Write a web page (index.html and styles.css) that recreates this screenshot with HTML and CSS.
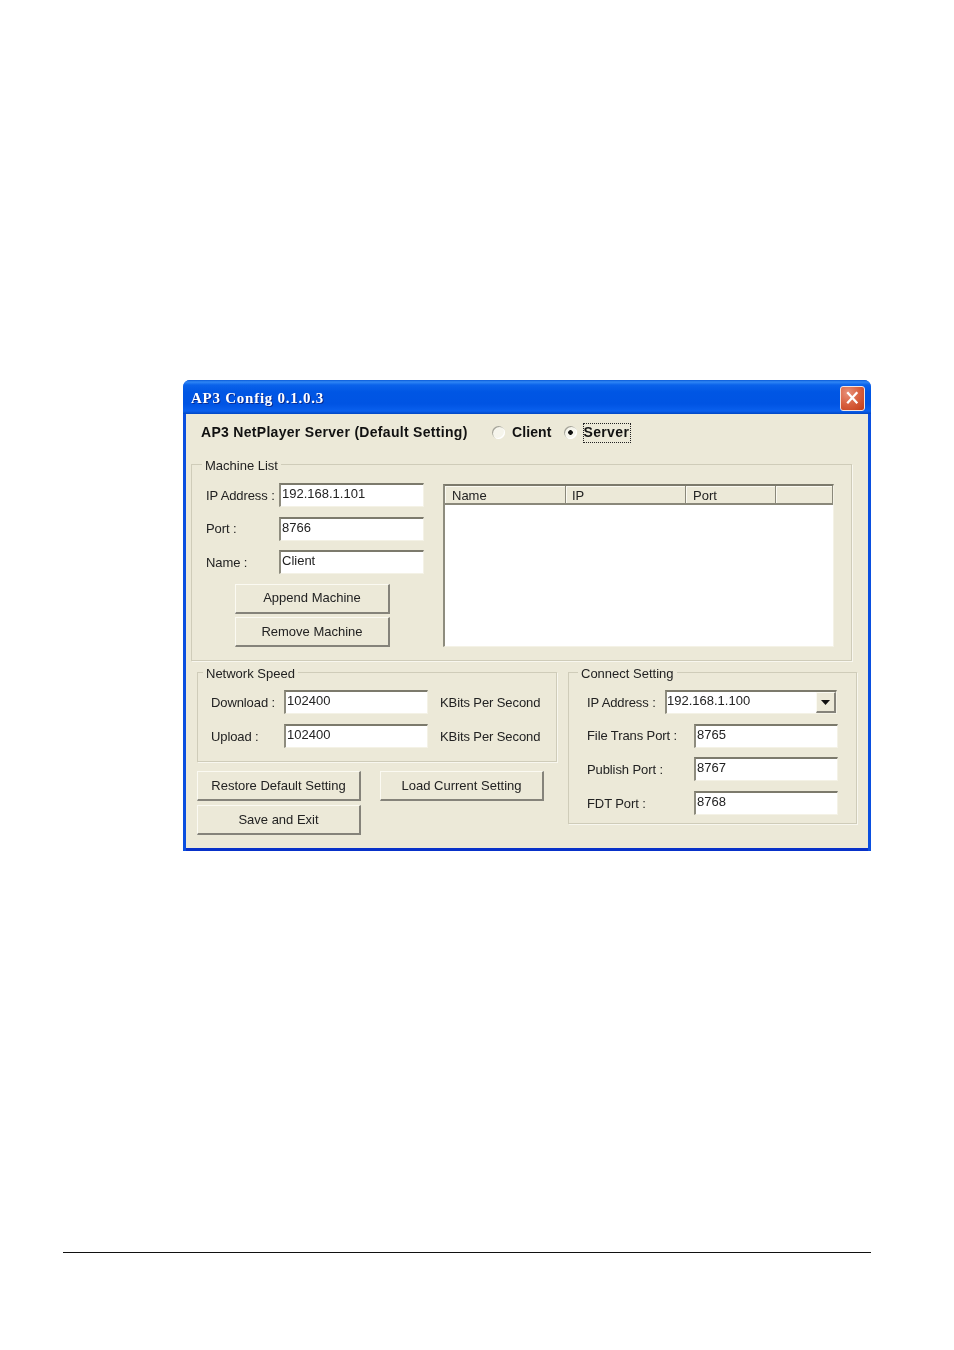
FILE: index.html
```html
<!DOCTYPE html>
<html lang="en">
<head>
<meta charset="utf-8">
<title>AP3 Config</title>
<link rel="stylesheet" href="styles.css">
</head>
<body>
<main class="page">
  <section class="window">
    <header class="titlebar">
      <span class="title">AP3 Config 0.1.0.3</span>
      <span class="close"><svg viewBox="0 0 24 24" width="24" height="24"><path d="M6.5 6 L17 17.5 M17 6 L6.5 17.5" stroke="#fff" stroke-width="2.4" fill="none"/></svg></span>
    </header>
    <div class="client">
      <div class="mode">
        <span class="mode-title">AP3 NetPlayer Server (Default Setting)</span>
        <span class="radio radio-client"></span><span class="mode-opt">Client</span>
        <span class="radio radio-server checked"></span><span class="mode-opt focus">Server</span>
      </div>

      <div class="group machine">
        <span class="legend">Machine List</span>
        <div class="machine-left">
          <div class="field"><span class="label">IP Address :</span><div class="box">192.168.1.101</div></div>
          <div class="field"><span class="label">Port :</span><div class="box">8766</div></div>
          <div class="field"><span class="label">Name :</span><div class="box">Client</div></div>
          <div class="machine-btns">
            <div class="btn">Append Machine</div>
            <div class="btn">Remove Machine</div>
          </div>
        </div>
        <div class="list">
          <div class="list-head">
            <span class="col col-name">Name</span>
            <span class="col col-ip">IP</span>
            <span class="col col-port">Port</span>
            <span class="col col-end"></span>
          </div>
        </div>
      </div>

      <div class="lower">
        <div class="lower-left">
          <div class="group network">
            <span class="legend legend-network">Network Speed</span>
            <div class="field"><span class="label">Download :</span><div class="box">102400</div><span class="unit">KBits Per Second</span></div>
            <div class="field"><span class="label">Upload :</span><div class="box">102400</div><span class="unit">KBits Per Second</span></div>
          </div>
          <div class="actions">
            <div class="btn">Restore Default Setting</div>
            <div class="btn">Load Current Setting</div>
            <div class="btn">Save and Exit</div>
          </div>
        </div>
        <div class="group connect">
          <span class="legend legend-connect">Connect Setting</span>
          <div class="field"><span class="label label-ip">IP Address :</span>
            <div class="box combo">192.168.1.100<span class="arrow"><svg viewBox="0 0 9 5" width="9" height="5"><path d="M0 0 H9 L4.5 5 Z" fill="#111"/></svg></span></div>
          </div>
          <div class="field"><span class="label label-port">File Trans Port :</span><div class="box">8765</div></div>
          <div class="field"><span class="label label-port">Publish Port :</span><div class="box">8767</div></div>
          <div class="field"><span class="label label-port">FDT Port :</span><div class="box">8768</div></div>
        </div>
      </div>
    </div>
  </section>
  <hr class="rule">
</main>
</body>
</html>
```
FILE: styles.css
```css
* { box-sizing: border-box; }
html, body { margin: 0; padding: 0; background: #fff; }
.page { width: 954px; height: 1350px; padding-top: 380px; overflow: hidden; }

.window {
  width: 688px;
  height: 471px;
  margin-left: 183px;
  border-radius: 7px 7px 0 0;
  background: #0a4fe0;
  display: flex;
  flex-direction: column;
  font: 13px/16px "Liberation Sans", Arial, sans-serif;
  color: #222;
  filter: blur(0.5px);
}

.titlebar {
  height: 34px;
  flex: none;
  display: flex;
  align-items: center;
  justify-content: space-between;
  padding: 2px 6px 0 8px;
  border-radius: 7px 7px 0 0;
  background: linear-gradient(180deg, #0a5ad8 0, #2f86f5 2px, #0a62ea 5px, #0056e4 12px, #0054e3 24px, #0a60ee 31px, #0046c4 34px);
}
.title {
  font: bold 15px/18px "Liberation Serif", serif;
  letter-spacing: 0.75px;
  color: #fff;
  text-shadow: 1px 1px 0 #0a2a90;
}
.close {
  width: 25px;
  height: 25px;
  display: flex;
  align-items: center;
  justify-content: center;
  border: 1px solid #f4e4de;
  border-radius: 3px;
  background: radial-gradient(circle at 30% 25%, #e8917a 0, #d8603f 50%, #c23c18 100%);
}

.client {
  flex: 1;
  margin: 0 3px 3px;
  background: #ece9d8;
  padding: 1px 0 0;
  box-shadow: 0 3px 0 #0831c9;
}

.mode {
  height: 49px;
  padding: 8px 0 0 15px;
  display: flex;
  align-items: flex-start;
  font-weight: bold;
  font-size: 14px;
  line-height: 18px;
  color: #111;
}
.mode-title { width: 291px; letter-spacing: 0.3px; white-space: nowrap; }
.mode-opt { letter-spacing: 0.1px; }
.radio {
  width: 13px;
  height: 13px;
  margin-top: 3px;
  border-radius: 50%;
  flex: none;
  background: #f6f5ec;
  box-shadow: inset 1px 1px 0 #a5a498, inset -1px -1px 0 #fff;
}
.radio-client { margin-right: 7px; }
.radio-server { margin-left: 12px; margin-right: 7px; }
.checked { background: radial-gradient(circle, #111 0 2px, #f6f5ec 2.6px); }
.focus {
  outline: 1px dotted #222;
  width: 46px;
  height: 18px;
  margin-top: 1px;
  line-height: 16px;
  letter-spacing: 0.35px;
  white-space: nowrap;
}

.group {
  position: relative;
  border: 1px solid #cfccb9;
  box-shadow: 1px 1px 0 #f8f7ef;
}
.legend {
  position: absolute;
  top: -7px;
  left: 10px;
  padding: 0 3px;
  background: #ece9d8;
  white-space: nowrap;
}
.legend-network { left: 5px; }
.legend-connect { left: 9px; }

.field { display: flex; align-items: center; height: 24px; }
.label { width: 73px; flex: none; white-space: nowrap; padding-top: 1px; letter-spacing: -0.1px; }
.box {
  height: 24px;
  flex: 1;
  min-width: 0;
  padding: 1px 0 0 1px;
  background: #fff;
  border-style: solid;
  border-width: 2px 1px 1px 2px;
  border-color: #7c7a6c #f4f2e6 #f4f2e6 #8e8c7e;
  color: #222;
  white-space: nowrap;
}

.btn {
  height: 30px;
  display: flex;
  align-items: center;
  justify-content: center;
  background: #ece9d8;
  border-style: solid;
  border-width: 1px 2px 2px 1px;
  border-color: #fbfaf2 #85837a #85837a #fbfaf2;
  white-space: nowrap;
}

/* Machine list */
.machine {
  width: 661px;
  height: 197px;
  margin-left: 5px;
  padding: 18px 0 0 14px;
  display: flex;
  gap: 19px;
}
.machine-left { width: 218px; flex: none; display: flex; flex-direction: column; gap: 9.7px; }
.machine-btns { margin-left: 29px; width: 155px; display: flex; flex-direction: column; gap: 3px; }
.machine-btns .btn:first-child { padding-bottom: 1px; }

.list {
  width: 391px;
  height: 163px;
  margin-top: 1px;
  background: #fff;
  border-style: solid;
  border-width: 2px 1px 1px 2px;
  border-color: #7c7a6c #f4f2e6 #f4f2e6 #8e8c7e;
}
.list-head { display: flex; height: 19px; }
.col {
  padding: 2px 0 0 7px;
  background: #ece9d8;
  border-style: solid;
  border-width: 0 1px 2px 0;
  border-color: #8a887a;
  box-shadow: inset 1px 1px 0 #fbfaf2;
}
.col-name { width: 121px; }
.col-ip { width: 120px; padding-left: 6px; }
.col-port { width: 90px; }
.col-end { width: 57px; }

/* Lower area */
.lower { display: flex; margin: 11px 0 0 11px; gap: 11px; align-items: flex-start; }
.lower-left { width: 360px; flex: none; }

.network {
  height: 90px;
  padding: 17px 0 0 13px;
  display: flex;
  flex-direction: column;
  gap: 10px;
}
.network .box { flex: none; width: 144px; }
.unit { margin-left: 12px; padding-top: 1px; white-space: nowrap; letter-spacing: -0.1px; }

.actions {
  margin-top: 9px;
  display: grid;
  grid-template-columns: 164px 164px;
  column-gap: 19px;
  row-gap: 4px;
}

.connect {
  width: 289px;
  height: 152px;
  padding: 17px 0 0 18px;
  display: flex;
  flex-direction: column;
  gap: 9.7px;
}
.connect .field { width: 270px; }
.label-ip { width: 78px; }
.label-port { width: 107px; }
.connect .box { flex: none; width: 144px; }
.connect .combo { width: 172px; padding-left: 0; position: relative; }
.arrow {
  position: absolute;
  top: 0;
  right: 0;
  width: 20px;
  height: 21px;
  display: flex;
  align-items: center;
  justify-content: center;
  background: #ece9d8;
  border-style: solid;
  border-width: 1px 2px 2px 1px;
  border-color: #fbfaf2 #85837a #85837a #fbfaf2;
}

.rule {
  width: 808px;
  height: 1px;
  margin: 401px 0 0 63px;
  border: 0;
  background: #111;
}
```
